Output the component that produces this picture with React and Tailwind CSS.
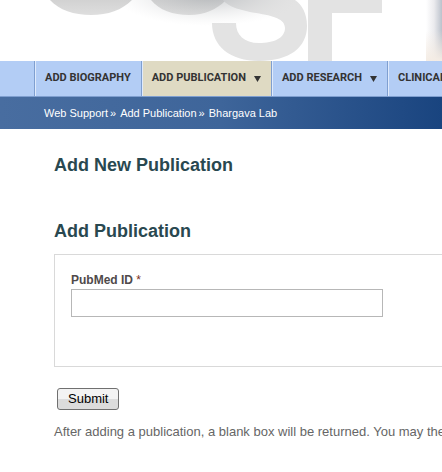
const menu = [
  { label: 'ADD BIOGRAPHY' },
  { label: 'ADD PUBLICATION', active: true, children: true },
  { label: 'ADD RESEARCH', children: true },
  { label: 'CLINICAL TRIALS' },
]

const crumbs = ['Web Support', 'Add Publication', 'Bhargava Lab']

function Banner() {
  return (
    <header className="flex h-[61px] justify-between overflow-hidden bg-white">
      <svg viewBox="0 0 400 61" className="h-[61px] w-[400px] shrink-0" aria-hidden="true">
        <defs>
          <linearGradient id="bowl" x1="0" y1="0" x2="0" y2="1">
            <stop offset="0" stopColor="#d2d2d2" />
            <stop offset="1" stopColor="#dedede" />
          </linearGradient>
          <radialGradient id="shade" gradientUnits="userSpaceOnUse" cx="0" cy="0" r="1" gradientTransform="translate(208 -6) scale(95 32)">
            <stop offset="0" stopColor="#a9adb1" stopOpacity="0.7" />
            <stop offset="0.5" stopColor="#b9bcbf" stopOpacity="0.3" />
            <stop offset="1" stopColor="#d9dadb" stopOpacity="0" />
          </radialGradient>
        </defs>
        <path d="M50 0C59 10 74 15 91 15C108 15 122 10 132 0Z" fill="url(#bowl)" />
        <path d="M151 0C159 10 173 15 189 15C205 15 217 9 225 1V0Z" fill="url(#bowl)" />
        <path
          d="M223 0C228 7 243 11 256 13C274 16 285 19 285 28C285 38 274 43 259 43C244 43 236 35 236 23H212C212 46 230 61 259 61C290 61 307 47 307 26C307 13 302 5 295 0Z"
          fill="#e3e3e3"
        />
        <path d="M308 0H382V13H332V61H308Z" fill="#e3e3e3" />
        <rect x="110" y="0" width="195" height="28" fill="url(#shade)" />
      </svg>
      <div className="w-4 shrink-0 bg-linear-to-r from-white via-[#ebebee] to-[#bcc2cc]">
        <div className="h-full bg-linear-to-b from-transparent via-transparent to-[#f4ece4]" />
      </div>
    </header>
  )
}

function MainMenu() {
  return (
    <nav className="flex h-9 overflow-hidden border-b border-[#7f9fd0] bg-[#b3cdf5] pl-[34px]">
      {menu.map((item) => (
        <a
          key={item.label}
          href="#"
          className={`flex shrink-0 items-center border-l border-[#7f9fd0] pr-2.5 font-['Roboto',Arial,sans-serif] text-[11px] font-bold whitespace-nowrap text-[#333333] ${
            item.active ? 'bg-[#dfdac3]' : 'bg-[#b3cdf5]'
          }`}
        >
          <span className="h-full w-px bg-[#dfeafc]" />
          <span className="pl-[9px]">{item.label}</span>
          {item.children && (
            <svg viewBox="0 0 7 6" className="ml-2 h-1.5 w-[7px]" aria-hidden="true">
              <path d="M0 0H7L3.5 6Z" fill="#333333" />
            </svg>
          )}
        </a>
      ))}
    </nav>
  )
}

function Breadcrumb() {
  return (
    <nav
      aria-label="Breadcrumb"
      className="flex h-8 items-center gap-1 bg-linear-to-r from-[#486da0] via-[#3e659a] to-[#19447f] pl-11 text-[11px] whitespace-nowrap text-white"
    >
      {crumbs.map((crumb, i) => (
        <span key={crumb} className="flex gap-0.5">
          <a href="#">{crumb}</a>
          {i < crumbs.length - 1 && <span>»</span>}
        </span>
      ))}
    </nav>
  )
}

export default function App() {
  return (
    <div className="overflow-hidden bg-white font-['Liberation_Sans',Arial,sans-serif]">
      <Banner />
      <MainMenu />
      <Breadcrumb />
      <main className="pt-6 pb-8 pl-[54px]">
        <h1 className="text-lg leading-6 font-bold text-[#294850]">Add New Publication</h1>
        <form onSubmit={(e) => e.preventDefault()}>
          <h2 className="mt-[42px] text-lg leading-6 font-bold text-[#294850]">Add Publication</h2>
          <div className="mt-[11px] border border-r-0 border-[#d9d9d9] px-4 pt-[17px] pb-[49px]">
            <label htmlFor="pubmed-id" className="block text-xs leading-[17px] font-bold text-[#4f4a4a]">
              PubMed ID <span className="font-normal text-[#7a3020]">*</span>
            </label>
            <input
              id="pubmed-id"
              type="text"
              className="block h-7 w-full max-w-[312px] border border-[#b7b7b7] bg-white px-1 text-sm"
            />
          </div>
          <button
            type="submit"
            className="mt-[21px] ml-[3px] block h-[22px] rounded-[3px] border border-[#707070] bg-linear-to-b from-[#f3f3f3] from-50% to-[#dcdcdc] to-50% px-2.5 text-[13px] leading-5 text-black"
          >
            Submit
          </button>
        </form>
        <p className="mt-3 text-[13px] leading-5 whitespace-nowrap text-[#666666]">
          After adding a publication, a blank box will be returned. You may then add another publication.
        </p>
      </main>
    </div>
  )
}
